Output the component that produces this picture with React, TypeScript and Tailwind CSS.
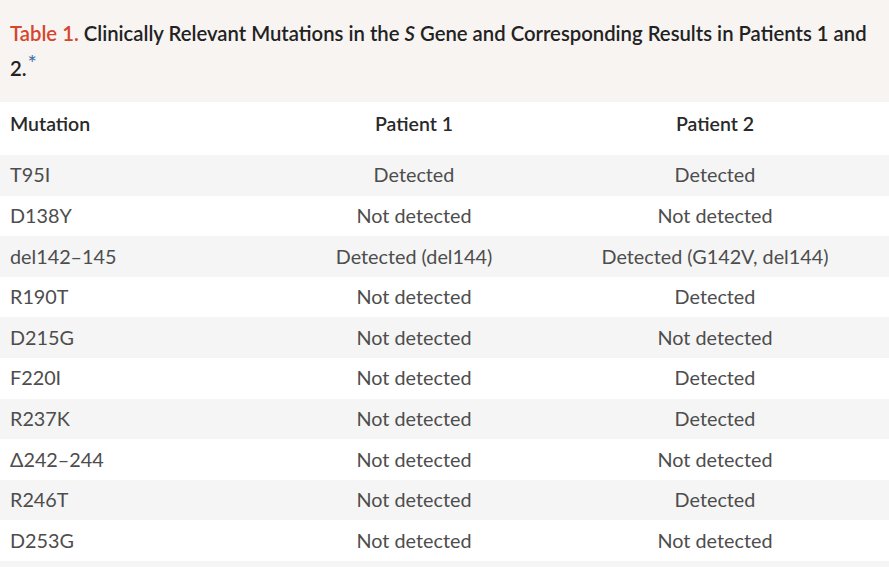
import React from "react";

const rows: [string, string, string][] = [
  ["T95I", "Detected", "Detected"],
  ["D138Y", "Not detected", "Not detected"],
  ["del142–145", "Detected (del144)", "Detected (G142V, del144)"],
  ["R190T", "Not detected", "Detected"],
  ["D215G", "Not detected", "Not detected"],
  ["F220I", "Not detected", "Detected"],
  ["R237K", "Not detected", "Detected"],
  ["Δ242–244", "Not detected", "Not detected"],
  ["R246T", "Not detected", "Detected"],
  ["D253G", "Not detected", "Not detected"],
];

export default function App() {
  return (
    <div className="w-[889px] h-[567px] overflow-hidden bg-white" style={{ fontFamily: "Lato, 'Open Sans', sans-serif" }}>
      <div className="h-[102px] bg-[#f7f4f2] pl-[10px] pr-2 pt-[16px]">
        <p className="text-[20.3px] leading-[35px] font-semibold text-[#222]">
          <span className="text-[#d6452c]">Table 1.</span> Clinically Relevant Mutations in the <i>S</i> Gene and Corresponding Results in Patients 1 and 2.
          <span className="relative -top-[5px] ml-[1px] text-[#3b6fa8] text-[22px] leading-none font-normal">*</span>
        </p>
      </div>
      <div className="grid grid-cols-[287px_254px_348px] h-[53px] items-center pb-[9px] text-[19.5px] font-semibold text-[#2a2a2a]">
        <div className="pl-[10px]">Mutation</div>
        <div className="text-center">Patient 1</div>
        <div className="text-center">Patient 2</div>
      </div>
      {rows.map((r, i) => (
        <div
          key={i}
          className={`grid grid-cols-[287px_254px_348px] h-[40.6px] items-center text-[19.8px] text-[#4d4d4d] ${i % 2 === 0 ? "bg-[#f5f5f5]" : "bg-white"}`}
        >
          <div className="pl-[10px]">{r[0]}</div>
          <div className="text-center">{r[1]}</div>
          <div className="text-center">{r[2]}</div>
        </div>
      ))}
      <div className="h-[10px] bg-[#f5f5f5]" />
    </div>
  );
}
